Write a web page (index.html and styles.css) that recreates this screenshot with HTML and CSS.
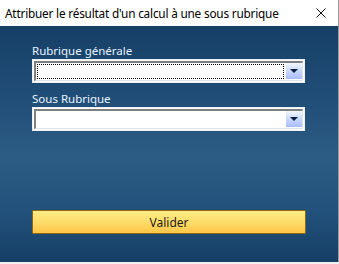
FILE: index.html
```html
<!DOCTYPE html>
<html lang="fr">
<head>
    <meta charset="UTF-8">
    <title>Attribuer le résultat d'un calcul à une sous rubrique</title>
    <link rel="stylesheet" href="styles.css">
</head>
<body>
    <div class="window">
        <div class="titlebar">
            <span class="title">Attribuer le résultat d'un calcul à une sous rubrique</span>
            <svg class="close" viewBox="0 0 10 10">
                <path d="M0.5 0.5 L9.5 9.5 M9.5 0.5 L0.5 9.5"/>
            </svg>
        </div>

        <div class="content">
            <label class="field-label">Rubrique générale</label>
            <div class="combo">
                <div class="combo-inner">
                    <div class="combo-value focused"></div>
                    <div class="combo-btn"><span class="arrow"></span></div>
                </div>
            </div>

            <label class="field-label second">Sous Rubrique</label>
            <div class="combo">
                <div class="combo-inner">
                    <div class="combo-value"></div>
                    <div class="combo-btn"><span class="arrow"></span></div>
                </div>
            </div>

            <button class="validate-btn">Valider</button>
        </div>
    </div>
</body>
</html>
```

FILE: styles.css
```css
* {
    margin: 0;
    padding: 0;
    box-sizing: border-box;
}

body {
    width: 339px;
    height: 264px;
    overflow: hidden;
    font-family: 'Noto Sans', 'Open Sans', sans-serif;
    background: #f0f0f0;
}

.window {
    height: 262px;
    display: flex;
    flex-direction: column;
    border-right: 1px solid #9a9a9a;
}

.titlebar {
    height: 26px;
    background: #ffffff;
    display: flex;
    align-items: center;
    justify-content: space-between;
    padding: 0 12px 0 5px;
}

.title {
    font-size: 11.8px;
    color: #000;
    letter-spacing: -0.2px;
}

.close {
    width: 10px;
    height: 10px;
    stroke: #111;
    stroke-width: 1;
    fill: none;
}

.content {
    flex: 1;
    background: linear-gradient(180deg, #163f66 0%, #22507a 35%, #2c5b83 55%, #21507a 80%, #163f65 100%);
    padding: 16px 33px 0 32px;
    display: flex;
    flex-direction: column;
}

.field-label {
    color: #e6f3ff;
    font-size: 11.5px;
    height: 17px;
    line-height: 17px;
}

.field-label.second {
    margin-top: 7px;
}

.combo {
    height: 24px;
    background: #ffffff;
    border: 1px solid #f0f0f0;
    padding: 1px;
}

.combo-inner {
    height: 100%;
    display: flex;
    border-top: 2px solid #7f7f7f;
    border-left: 2px solid #7f7f7f;
    border-right: 1px solid #e3e3e3;
    border-bottom: 1px solid #e3e3e3;
    background: #ffffff;
}

.combo-value {
    flex: 1;
    margin: 1px 2px 1px 1px;
}

.combo-value.focused {
    border: 1px dotted #000;
}

.combo-btn {
    width: 16px;
    margin: 0 0 1px 0;
    background: linear-gradient(180deg, #f4f7ff 0%, #c8d8ff 50%, #a7bcff 100%);
    display: flex;
    align-items: center;
    justify-content: center;
}

.arrow {
    width: 0;
    height: 0;
    border-left: 4px solid transparent;
    border-right: 4px solid transparent;
    border-top: 4px solid #0e1b3a;
}

.validate-btn {
    margin-top: 79px;
    height: 24px;
    width: 274px;
    border: 1px solid #8c6a14;
    border-radius: 1px;
    background: linear-gradient(180deg, #ffec85 0%, #ffdc6a 50%, #ffc647 100%);
    font-family: 'Noto Sans', 'Open Sans', sans-serif;
    font-size: 12px;
    color: #1a1a1a;
}
```
